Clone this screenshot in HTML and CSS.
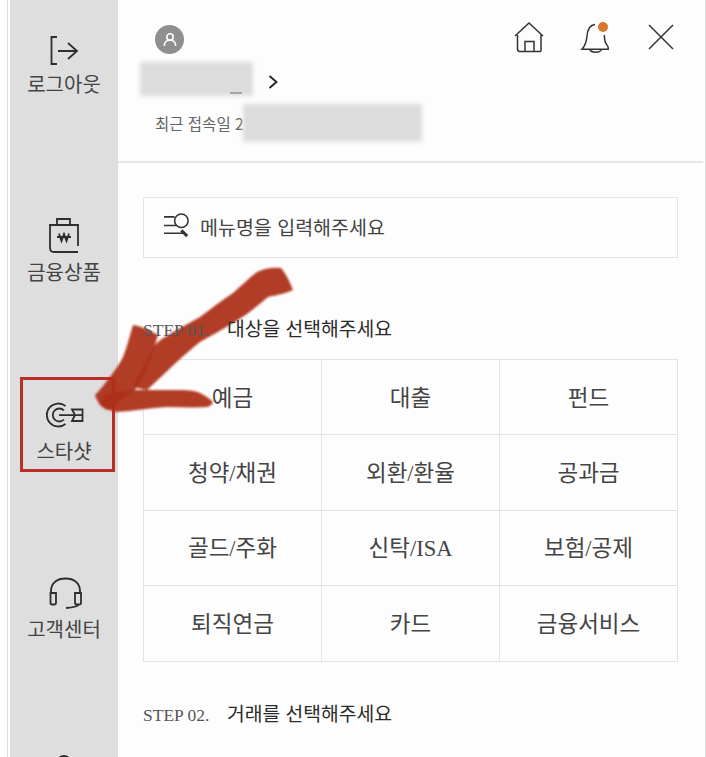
FILE: index.html
```html
<!DOCTYPE html>
<html lang="ko">
<head>
    <meta charset="UTF-8">
    <meta name="viewport" content="width=device-width, initial-scale=1.0">
    <title>전체메뉴</title>
    <link rel="stylesheet" href="styles.css">
</head>
<body>
    <div class="page">
        <nav class="side">
            <a class="side-item">
                <svg class="side-icon" viewBox="0 0 36 36"><path d="M11 4H5.500V31H11M12 18H31M22 10L31 18L22 26"/></svg>
                <span>로그아웃</span>
            </a>
            <a class="side-item">
                <svg class="side-icon" viewBox="0 0 36 36"><path d="M8 7H4V30C4 33 5 34 8 34H32M32 28V7H8M11 7V1H24V7M11 19H25M13 15.500L15.500 23L18 16L20.500 23L23 15.500"/></svg>
                <span>금융상품</span>
            </a>
            <a class="side-item">
                <svg class="side-icon" viewBox="0 0 36 36"><path d="M19.500 9A11.500 11.500 0 1 0 19.500 27M18 13.500A6.500 6.500 0 1 0 18 22.500M13 18.200H36M26 12.500H36.500V24H26L29 18Z"/></svg>
                <span>스타샷</span>
            </a>
            <a class="side-item">
                <svg class="side-icon" viewBox="0 0 36 36"><path d="M5 18V16C5 8 11 3.500 19.500 3.500C28 3.500 34 8 34 16V18M4.500 18H10V28C10 29 9 29.500 8 29.500H6C5 29.500 4.500 29 4.500 28ZM29 18H35V28C35 29 34 29.500 33 29.500H31C30 29.500 29 29 29 28ZM33 29.500C31 32 27 32.500 20 33"/></svg>
                <span>고객센터</span>
            </a>
            <a class="side-item">
                <svg class="side-icon" viewBox="0 0 36 36"><circle cx="18" cy="9" r="7"/></svg>
            </a>
        </nav>

        <main class="panel">
            <header class="top">
                <div class="top-row">
                    <span class="avatar">
                        <svg viewBox="0 0 16 16"><circle cx="8" cy="5" r="3.200"/><path d="M2.500 14V12.500C2.500 10 5 8.200 8 8.200C11 8.200 13.500 10 13.500 12.500V14"/></svg>
                    </span>
                    <div class="top-icons">
                        <svg class="top-icon" viewBox="0 0 30 30"><path d="M1 14L15 1L29 14M3.500 13V27C3.500 29 4.500 29.500 6 29.500H26.500C27.500 28.500 27 28 27 27V13M11 29.500V19.500H20V29.500"/></svg>
                        <span class="bell">
                            <svg class="top-icon" viewBox="0 0 30 30"><path d="M15 2.500C9 3 7.500 8 7 14C6.500 20 5 24 2 27.300H28.300C29 25 27 23 26 21.500C25 20 24.500 17 24.300 13M10 27.500C11 31 20 31 21.500 27.500"/></svg>
                            <i class="dot"></i>
                        </span>
                        <svg class="top-icon close" viewBox="0 0 26 26"><path d="M1 1L25 25M25 1L1 25"/></svg>
                    </div>
                </div>
                <div class="name-row">
                    <span class="name-wrap">
                        <span class="blur-name"></span>
                        <i class="name-tail"></i>
                    </span>
                    <svg class="chevron" viewBox="0 0 10 14"><path d="M1.500 1L8.500 7L1.500 13"/></svg>
                </div>
                <div class="date-row">
                    <span>최근 접속일 2</span>
                    <span class="blur-date"></span>
                </div>
            </header>

            <section class="body">
                <div class="search">
                    <svg class="search-icon" viewBox="0 0 28 28"><path d="M0 4H11M0 13H13M0 21H20"/><circle cx="18" cy="8" r="7"/><path class="search-handle" d="M18 18L24 24"/></svg>
                    <span>메뉴명을 입력해주세요</span>
                </div>

                <h2 class="step step-one"><em>STEP 01.</em>대상을 선택해주세요</h2>
                <div class="grid">
                    <a>예금</a><a>대출</a><a>펀드</a>
                    <a>청약/채권</a><a>외환/환율</a><a>공과금</a>
                    <a>골드/주화</a><a>신탁/ISA</a><a>보험/공제</a>
                    <a>퇴직연금</a><a>카드</a><a>금융서비스</a>
                </div>

                <h2 class="step step-two"><em>STEP 02.</em>거래를 선택해주세요</h2>
            </section>
        </main>
    </div>

    <!-- red marker scribbled over the screenshot -->
    <div class="mark-box"></div>
    <svg class="mark-arrow" viewBox="0 0 706 757">
        <path d="M257 272C264 268 274 267 281 268C286 274 290 282 293 290C285 294 276 295 268 297C255 308 245 316 233 323C222 330 210 336 200 342C192 348 186 354 180 359L163 375L147 390L133 387C137 378 142 368 147 360C150 352 153 347 157 343C162 338 167 336 173 332L200 317C212 308 222 300 233 293C241 286 249 278 257 272Z"/>
        <path d="M133 325C140 326 150 330 158 335C155 345 153 352 150 360C146 372 140 382 135 390L108 410C102 408 98 404 95 395C102 388 105 383 110 377C115 370 119 365 123 357C127 347 130 335 133 325Z"/>
        <path d="M105 394C115 392 122 391 130 390H180C190 390 196 391 200 393C206 396 210 399 213 402C212 405 210 406 207 407C194 408 180 407 167 407C150 408 133 411 117 412C110 411 104 408 100 404Z"/>
    </svg>
</body>
</html>
```

FILE: styles.css
```css
* { box-sizing: border-box; margin: 0; padding: 0; }
html, body { width: 706px; height: 757px; overflow: hidden; }
body {
    position: relative;
    background: #fff;
    font-family: "Noto Sans CJK KR", "Noto Sans", sans-serif;
    color: #3a3a3a;
}
.page {
    display: flex;
    height: 757px;
    padding-left: 7px;
    border-right: 1px solid #d9d9d9;
}

/* left rail */
.side {
    flex: none;
    width: 111px;
    height: 757px;
    overflow: hidden;
    border-left: 1px solid #dcdcdc;
    padding-left: 2px;
    background: #fff;
}
.side-item {
    display: flex;
    flex-direction: column;
    align-items: center;
    height: 178.500px;
    background: #dedede;
    padding-top: 33px;
    font-size: 20px;
    line-height: 28px;
    color: #444;
}
.side-item:first-child { height: 185px; }
.side-item:first-child .side-icon { margin-bottom: 1px; }
.side-icon {
    flex: none;
    width: 36px;
    height: 36px;
    margin-bottom: 4px;
    overflow: visible;
    fill: none;
    stroke: #2e2e2e;
    stroke-width: 1.800;
}

/* header */
.panel { flex: 1; min-width: 0; background: #fdfdfd; }
.top {
    height: 163px;
    margin-right: 2px;
    padding: 22px 0 0 37px;
    border-bottom: 2px solid #e6e6e6;
}
.top-row { display: flex; justify-content: space-between; align-items: flex-start; padding-right: 29px; }
.avatar {
    display: flex;
    align-items: center;
    justify-content: center;
    width: 29px;
    height: 29px;
    margin-top: 3px;
    border-radius: 50%;
    background: #8f8f8f;
}
.avatar svg { width: 16px; height: 16px; fill: none; stroke: #fff; stroke-width: 1.600; }
.top-icons { display: flex; align-items: flex-start; gap: 36px; }
.top-icon { display: block; width: 30px; height: 30px; overflow: visible; fill: none; stroke: #333; stroke-width: 1.500; }
.top-icon.close { width: 26px; height: 26px; margin: 2px 0 0 2px; }
.bell { position: relative; display: block; }
.dot {
    position: absolute;
    left: 18px;
    top: 0;
    width: 10px;
    height: 10px;
    border-radius: 50%;
    background: #d9772e;
}
.name-row { display: flex; align-items: center; gap: 15px; margin: 7px 0 0 -15px; height: 36px; }
.name-wrap { position: relative; display: block; }
.blur-name, .blur-date { display: block; background: #dcdcdc; filter: blur(2px); }
.blur-name { width: 113px; height: 34px; }
.name-tail { position: absolute; left: 90px; top: 30px; width: 12px; height: 2px; background: #a5a5a5; }
.chevron { width: 10px; height: 14px; margin-top: 6px; fill: none; stroke: #222; stroke-width: 1.800; }
.date-row { display: flex; align-items: center; font-size: 15.500px; color: #666; height: 38px; margin-top: 7px; }
.blur-date { width: 179px; height: 38px; margin-left: -1px; }

/* body */
.body { padding: 34px 27px 0 25px; }
.search {
    display: flex;
    align-items: center;
    gap: 9px;
    height: 61px;
    padding: 0 0 2px 20px;
    border: 1px solid #e4e4e4;
    font-size: 19.500px;
    color: #444;
}
.search-icon { flex: none; width: 27px; height: 27px; overflow: visible; fill: none; stroke: #333; stroke-width: 1.600; }
.search-handle { stroke-width: 3; }
.step { font-size: 19.300px; font-weight: 400; line-height: 26px; color: #2a2a2a; }
.step em {
    display: inline-block;
    width: 84px;
    font-family: "Liberation Serif", serif;
    font-style: normal;
    font-size: 17.500px;
    color: #555;
}
/* the heading stays readable on top of the red marker */
.step-one { position: relative; z-index: 1; margin-top: 57px; }
.step-two { margin-top: 38px; }
.grid {
    display: grid;
    grid-template-columns: repeat(3, 1fr);
    grid-auto-rows: 75.400px;
    margin-top: 16px;
    border-top: 1px solid #e3e3e3;
    border-left: 1px solid #e3e3e3;
}
.grid a {
    display: flex;
    align-items: center;
    justify-content: center;
    padding-bottom: 3px;
    border-right: 1px solid #e3e3e3;
    border-bottom: 1px solid #e3e3e3;
    font-family: "Liberation Serif", "Noto Sans CJK KR", serif;
    font-size: 22.500px;
    color: #444;
}

/* annotation */
.mark-box {
    position: absolute;
    left: 20px;
    top: 377px;
    width: 95px;
    height: 95px;
    border: 3px solid #bb2d26;
}
.mark-arrow {
    position: absolute;
    left: 0;
    top: 0;
    width: 706px;
    height: 757px;
    filter: blur(1.200px);
}
.mark-arrow path { fill: #ad3119; fill-opacity: .94; }
```
